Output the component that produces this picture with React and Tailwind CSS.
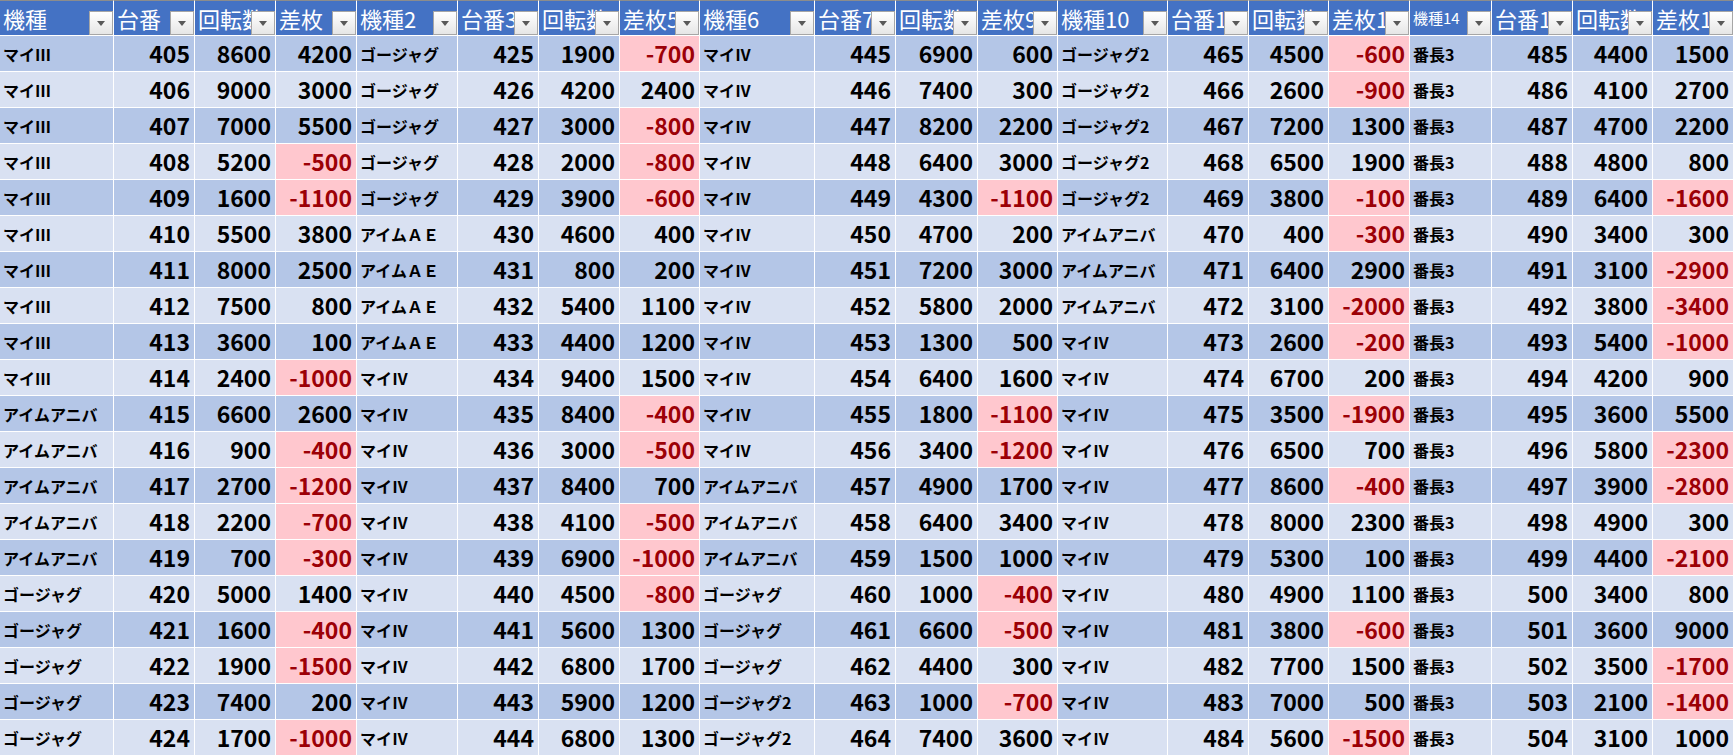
import React from 'react';

const groups = [
  {
    names: ['機種', '台番', '回転数', '差枚'],
    small: false,
    rows: [
      ['マイⅢ', 405, 8600, 4200], ['マイⅢ', 406, 9000, 3000], ['マイⅢ', 407, 7000, 5500],
      ['マイⅢ', 408, 5200, -500], ['マイⅢ', 409, 1600, -1100], ['マイⅢ', 410, 5500, 3800],
      ['マイⅢ', 411, 8000, 2500], ['マイⅢ', 412, 7500, 800], ['マイⅢ', 413, 3600, 100],
      ['マイⅢ', 414, 2400, -1000], ['アイムアニバ', 415, 6600, 2600], ['アイムアニバ', 416, 900, -400],
      ['アイムアニバ', 417, 2700, -1200], ['アイムアニバ', 418, 2200, -700], ['アイムアニバ', 419, 700, -300],
      ['ゴージャグ', 420, 5000, 1400], ['ゴージャグ', 421, 1600, -400], ['ゴージャグ', 422, 1900, -1500],
      ['ゴージャグ', 423, 7400, 200], ['ゴージャグ', 424, 1700, -1000],
    ],
  },
  {
    names: ['機種2', '台番3', '回転数4', '差枚5'],
    small: false,
    rows: [
      ['ゴージャグ', 425, 1900, -700], ['ゴージャグ', 426, 4200, 2400], ['ゴージャグ', 427, 3000, -800],
      ['ゴージャグ', 428, 2000, -800], ['ゴージャグ', 429, 3900, -600], ['アイムＡＥ', 430, 4600, 400],
      ['アイムＡＥ', 431, 800, 200], ['アイムＡＥ', 432, 5400, 1100], ['アイムＡＥ', 433, 4400, 1200],
      ['マイⅣ', 434, 9400, 1500], ['マイⅣ', 435, 8400, -400], ['マイⅣ', 436, 3000, -500],
      ['マイⅣ', 437, 8400, 700], ['マイⅣ', 438, 4100, -500], ['マイⅣ', 439, 6900, -1000],
      ['マイⅣ', 440, 4500, -800], ['マイⅣ', 441, 5600, 1300], ['マイⅣ', 442, 6800, 1700],
      ['マイⅣ', 443, 5900, 1200], ['マイⅣ', 444, 6800, 1300],
    ],
  },
  {
    names: ['機種6', '台番7', '回転数8', '差枚9'],
    small: false,
    rows: [
      ['マイⅣ', 445, 6900, 600], ['マイⅣ', 446, 7400, 300], ['マイⅣ', 447, 8200, 2200],
      ['マイⅣ', 448, 6400, 3000], ['マイⅣ', 449, 4300, -1100], ['マイⅣ', 450, 4700, 200],
      ['マイⅣ', 451, 7200, 3000], ['マイⅣ', 452, 5800, 2000], ['マイⅣ', 453, 1300, 500],
      ['マイⅣ', 454, 6400, 1600], ['マイⅣ', 455, 1800, -1100], ['マイⅣ', 456, 3400, -1200],
      ['アイムアニバ', 457, 4900, 1700], ['アイムアニバ', 458, 6400, 3400], ['アイムアニバ', 459, 1500, 1000],
      ['ゴージャグ', 460, 1000, -400], ['ゴージャグ', 461, 6600, -500], ['ゴージャグ', 462, 4400, 300],
      ['ゴージャグ2', 463, 1000, -700], ['ゴージャグ2', 464, 7400, 3600],
    ],
  },
  {
    names: ['機種10', '台番11', '回転数12', '差枚13'],
    small: false,
    rows: [
      ['ゴージャグ2', 465, 4500, -600], ['ゴージャグ2', 466, 2600, -900], ['ゴージャグ2', 467, 7200, 1300],
      ['ゴージャグ2', 468, 6500, 1900], ['ゴージャグ2', 469, 3800, -100], ['アイムアニバ', 470, 400, -300],
      ['アイムアニバ', 471, 6400, 2900], ['アイムアニバ', 472, 3100, -2000], ['マイⅣ', 473, 2600, -200],
      ['マイⅣ', 474, 6700, 200], ['マイⅣ', 475, 3500, -1900], ['マイⅣ', 476, 6500, 700],
      ['マイⅣ', 477, 8600, -400], ['マイⅣ', 478, 8000, 2300], ['マイⅣ', 479, 5300, 100],
      ['マイⅣ', 480, 4900, 1100], ['マイⅣ', 481, 3800, -600], ['マイⅣ', 482, 7700, 1500],
      ['マイⅣ', 483, 7000, 500], ['マイⅣ', 484, 5600, -1500],
    ],
  },
  {
    names: ['機種14', '台番15', '回転数16', '差枚17'],
    small: true,
    rows: [
      ['番長3', 485, 4400, 1500], ['番長3', 486, 4100, 2700], ['番長3', 487, 4700, 2200],
      ['番長3', 488, 4800, 800], ['番長3', 489, 6400, -1600], ['番長3', 490, 3400, 300],
      ['番長3', 491, 3100, -2900], ['番長3', 492, 3800, -3400], ['番長3', 493, 5400, -1000],
      ['番長3', 494, 4200, 900], ['番長3', 495, 3600, 5500], ['番長3', 496, 5800, -2300],
      ['番長3', 497, 3900, -2800], ['番長3', 498, 4900, 300], ['番長3', 499, 4400, -2100],
      ['番長3', 500, 3400, 800], ['番長3', 501, 3600, 9000], ['番長3', 502, 3500, -1700],
      ['番長3', 503, 2100, -1400], ['番長3', 504, 3100, 1000],
    ],
  },
];

// excel-style autofilter dropdown
const FilterButton = () => (
  <div className="absolute right-0 bottom-0 w-[24px] h-[24px] border border-[#a6a6a6] bg-gradient-to-b from-white to-[#e6e6e6] flex items-center justify-center">
    <div className="w-0 h-0 border-l-[4px] border-r-[4px] border-t-[5px] border-l-transparent border-r-transparent border-t-[#595959]" />
  </div>
);

const HeaderCell = ({ label, small }) => (
  <div className="relative h-[36px] overflow-hidden bg-[#4472c4] border-t border-t-[#8c8c8c] border-r border-b border-white">
    <div
      className={`h-full flex items-center pl-[3px] whitespace-nowrap text-white ${small ? 'text-[15px]' : 'text-[22px]'}`}
    >
      {label}
    </div>
    <FilterButton />
  </div>
);

const App = () => {
  const rowCount = groups[0].rows.length;

  return (
    <div
      className="w-[1734px] h-[756px] overflow-hidden bg-white"
      style={{ fontFamily: '"Noto Sans CJK JP", "Noto Sans", sans-serif' }}
    >
      <div className="grid grid-cols-[114px_81px_81px_81px_101px_81px_81px_80px_115px_81px_82px_80px_110px_81px_80px_81px_82px_81px_80px_81px]">
        {groups.map((g) =>
          g.names.map((name, i) => (
            <HeaderCell key={name} label={name} small={g.small && i === 0} />
          ))
        )}

        {Array.from({ length: rowCount }).map((_, r) => {
          const rowBg = r % 2 === 0 ? 'bg-[#b4c6e7]' : 'bg-[#d9e1f2]';
          return groups.map((g, gi) => {
            const [kind, no, spins, diff] = g.rows[r];
            const neg = diff < 0;
            return (
              <React.Fragment key={`${r}-${gi}`}>
                <div className={`h-[36px] flex items-center pl-[3px] border-r border-b border-white whitespace-nowrap overflow-hidden text-[16px] font-bold text-black ${rowBg}`}>
                  {kind}
                </div>
                <div className={`h-[36px] flex items-center justify-end pr-[4px] border-r border-b border-white text-[23px] font-bold text-black ${rowBg}`}>
                  {no}
                </div>
                <div className={`h-[36px] flex items-center justify-end pr-[4px] border-r border-b border-white text-[23px] font-bold text-black ${rowBg}`}>
                  {spins}
                </div>
                <div
                  className={`h-[36px] flex items-center justify-end pr-[4px] border-r border-b border-white text-[23px] font-bold ${
                    neg ? 'bg-[#ffc7ce] text-[#9c0006]' : `text-black ${rowBg}`
                  }`}
                >
                  {diff}
                </div>
              </React.Fragment>
            );
          });
        })}
      </div>
    </div>
  );
};

export default App;
